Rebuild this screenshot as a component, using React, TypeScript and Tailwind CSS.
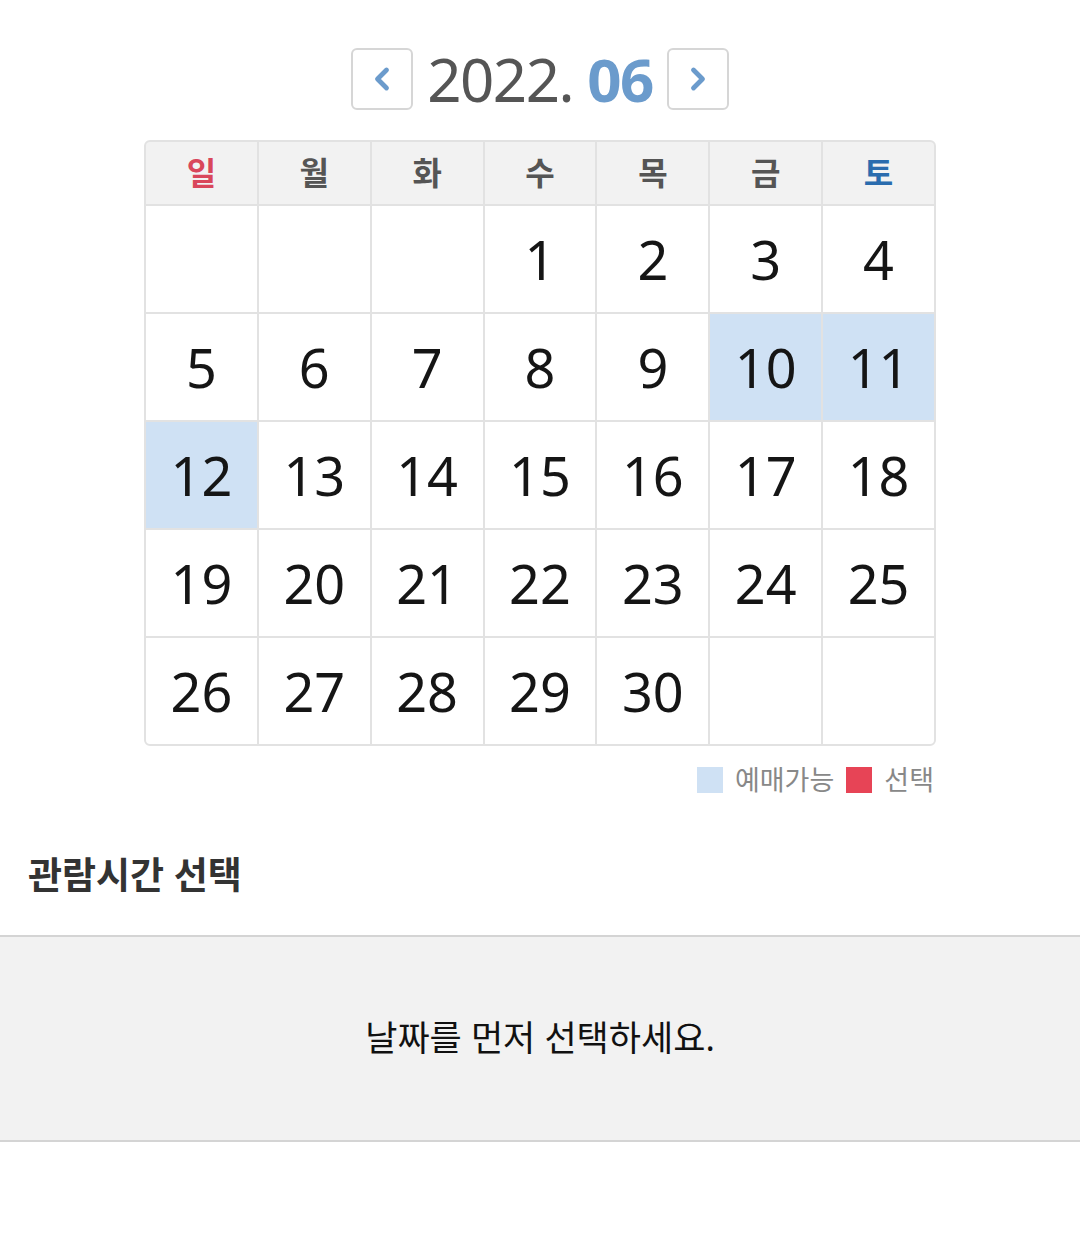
import { ChevronLeft, ChevronRight } from "lucide-react";

// ─── Data ──────────────────────────────────────────────────────────────────

const WEEKDAYS = ["일", "월", "화", "수", "목", "금", "토"];

// June 2022 starts on a Wednesday
const DAYS: (number | null)[] = [
    null, null, null,
    ...Array.from({ length: 30 }, (_, i) => i + 1),
    null, null,
];

const AVAILABLE = new Set([10, 11, 12]);

const FONT = { fontFamily: '"Noto Sans", "Noto Sans CJK KR", sans-serif' };

// ─── Calendar ──────────────────────────────────────────────────────────────

function NavButton({ dir }: { dir: "prev" | "next" }) {
    const Icon = dir === "prev" ? ChevronLeft : ChevronRight;
    return (
        <button className="flex h-[62px] w-[62px] items-center justify-center rounded-md border-2 border-[#d6d6d6] bg-white">
            <Icon className="h-9 w-9 text-[#6b9bcc]" strokeWidth={3.2} />
        </button>
    );
}

function Calendar() {
    return (
        <div className="mx-auto w-[792px]">
            <div className="flex items-center justify-center gap-[14px]">
                <NavButton dir="prev" />
                <div className="text-[60px] leading-none tracking-tight">
                    <span className="text-[#555]">2022. </span>
                    <span className="font-bold text-[#6b9bcc]">06</span>
                </div>
                <NavButton dir="next" />
            </div>

            <div className="mt-[30px] grid grid-cols-7 gap-[2px] overflow-hidden rounded-md border-2 border-[#e2e2e2] bg-[#e2e2e2]">
                {WEEKDAYS.map((d, i) => (
                    <div
                        key={d}
                        className={
                            "flex h-[62px] items-center justify-center bg-[#f2f2f2] text-[32px] font-bold " +
                            (i === 0 ? "text-[#d9475b]" : i === 6 ? "text-[#2a6cae]" : "text-[#555]")
                        }
                    >
                        {d}
                    </div>
                ))}
                {DAYS.map((n, i) => (
                    <div
                        key={i}
                        className={
                            "flex h-[106px] items-center justify-center text-[54px] text-[#151515] " +
                            (n !== null && AVAILABLE.has(n) ? "bg-[#cfe1f4]" : "bg-white")
                        }
                    >
                        {n}
                    </div>
                ))}
            </div>

            <div className="mt-[14px] flex items-center justify-end gap-3 pr-[2px] text-[27px] text-[#888]">
                <div className="flex items-center gap-3">
                    <span className="h-[26px] w-[26px] bg-[#cfe1f4]" />
                    <span>예매가능</span>
                </div>
                <div className="flex items-center gap-3">
                    <span className="h-[26px] w-[26px] bg-[#e74456]" />
                    <span>선택</span>
                </div>
            </div>
        </div>
    );
}

// ─── Page ──────────────────────────────────────────────────────────────────

export default function App() {
    return (
        <div className="min-h-[1241px] bg-white pt-[48px]" style={FONT}>
            <Calendar />

            <h2 className="mt-[46px] px-[28px] text-[37px] font-bold text-[#333]">관람시간 선택</h2>

            <div className="mt-[33px] flex h-[207px] items-center justify-center border-y-2 border-[#d4d4d4] bg-[#f2f2f2] text-[35px] text-[#111]">
                날짜를 먼저 선택하세요.
            </div>
        </div>
    );
}
